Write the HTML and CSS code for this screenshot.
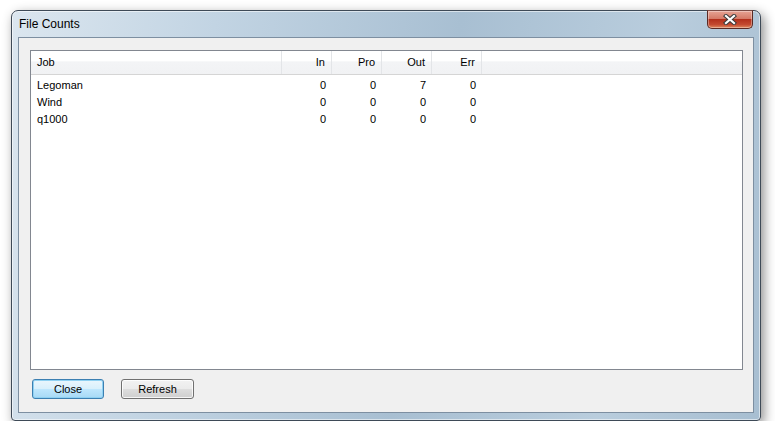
FILE: index.html
```html
<!DOCTYPE html>
<html lang="en">
<head>
<meta charset="UTF-8">
<title>File Counts</title>
<link rel="stylesheet" href="styles.css">
</head>
<body>

<div class="window">
    <div class="titlebar">
        <span class="title">File Counts</span>
        <button type="button" class="close-x" aria-label="Close">
            <svg width="14" height="11" viewBox="0 0 14 11">
                <path d="M3 2 L11 9 M11 2 L3 9" stroke="#3b3b3b" stroke-width="4.2" stroke-linecap="square"/>
                <path d="M3 2 L11 9 M11 2 L3 9" stroke="#fff" stroke-width="2.2" stroke-linecap="square"/>
            </svg>
        </button>
    </div>

    <div class="client">
        <!-- list of jobs -->
        <div class="listview">
            <div class="lv-row lv-head">
                <div class="cell">Job</div>
                <div class="cell num">In</div>
                <div class="cell num">Pro</div>
                <div class="cell num">Out</div>
                <div class="cell num">Err</div>
                <div class="cell fill"></div>
            </div>
            <div class="lv-body">
                <div class="lv-row">
                    <div class="cell">Legoman</div>
                    <div class="cell num">0</div>
                    <div class="cell num">0</div>
                    <div class="cell num">7</div>
                    <div class="cell num">0</div>
                </div>
                <div class="lv-row">
                    <div class="cell">Wind</div>
                    <div class="cell num">0</div>
                    <div class="cell num">0</div>
                    <div class="cell num">0</div>
                    <div class="cell num">0</div>
                </div>
                <div class="lv-row">
                    <div class="cell">q1000</div>
                    <div class="cell num">0</div>
                    <div class="cell num">0</div>
                    <div class="cell num">0</div>
                    <div class="cell num">0</div>
                </div>
            </div>
        </div>

        <div class="buttons">
            <button type="button" class="btn default">Close</button>
            <button type="button" class="btn">Refresh</button>
        </div>
    </div>
</div>

</body>
</html>
```

FILE: styles.css
```css
body {
    margin: 0;
    background: #ffffff;
    font-family: "Liberation Sans", Arial, sans-serif;
    font-size: 11px;
    color: #000;
}

.window {
    margin: 10px 0 0 11px;
    width: 748px;
    height: 409px;
    border: 1px solid #3e4a57;
    border-radius: 7px 7px 4px 4px;
    background: linear-gradient(100deg, #dbe6ef 0%, #c2d4e3 25%, #a8bfd2 55%, #b9cddd 80%, #a7bed1 100%);
    box-shadow: inset 0 0 0 1px rgba(255, 255, 255, 0.55), 3px 4px 12px rgba(0, 0, 0, 0.45);
}

.titlebar {
    display: flex;
    justify-content: space-between;
    align-items: flex-start;
    height: 26px;
    padding: 0 7px 0 7px;
}

.title {
    font-size: 12px;
    line-height: 12px;
    margin-top: 7px;
    color: #000;
}

.close-x {
    width: 46px;
    height: 19px;
    margin-top: -1px;
    padding: 0;
    border: 1px solid #5a2a24;
    border-top-color: #7a4a44;
    border-radius: 0 0 5px 5px;
    background: linear-gradient(#e7a394 0%, #d57a67 45%, #b3301c 50%, #c44a30 80%, #e08a5f 100%);
    box-shadow: inset 0 0 0 1px rgba(255, 255, 255, 0.35);
    display: flex;
    align-items: center;
    justify-content: center;
}

.client {
    margin-left: 6px;
    width: 734px;
    height: 374px;
    border: 1px solid #7d8fa1;
    background: #f0f0f0;
    padding: 0;
}

.listview {
    margin: 12px 0 0 11px;
    width: 711px;
    height: 318px;
    border: 1px solid #828790;
    background: #fff;
}

.lv-row {
    display: grid;
    grid-template-columns: 251px 50px 50px 50px 50px 1fr;
    height: 17px;
    line-height: 17px;
}

.lv-head {
    height: 23px;
    line-height: 23px;
    border-bottom: 1px solid #d5d5d5;
    background: linear-gradient(#ffffff 0%, #ffffff 45%, #f3f4f6 46%, #f1f2f4 100%);
}

.lv-head .cell {
    border-right: 1px solid #e3e5e8;
}

.lv-head .cell.fill {
    border-right: none;
}

.lv-body {
    padding-top: 2px;
}

.cell {
    padding-left: 6px;
    white-space: nowrap;
}

.cell.num {
    text-align: right;
    padding-left: 0;
    padding-right: 6px;
}

.buttons {
    display: flex;
    gap: 17px;
    margin: 9px 0 0 13px;
}

.btn {
    width: 72px;
    height: 20px;
    padding: 0;
    font-family: "Liberation Sans", Arial, sans-serif;
    font-size: 11px;
    color: #000;
    border: 1px solid #707070;
    border-radius: 3px;
    background: linear-gradient(#f2f2f2 0%, #ebebeb 48%, #dddddd 52%, #cfcfcf 100%);
    box-shadow: inset 0 0 0 1px rgba(255, 255, 255, 0.8);
}

.btn + .btn {
    width: 73px;
}

.btn.default {
    border-color: #3c7fb1;
    background: linear-gradient(#eaf6fd 0%, #d9f0fc 48%, #bee6fd 52%, #a7d9f5 100%);
    box-shadow: inset 0 0 0 1px #8fd1f2;
}
```
